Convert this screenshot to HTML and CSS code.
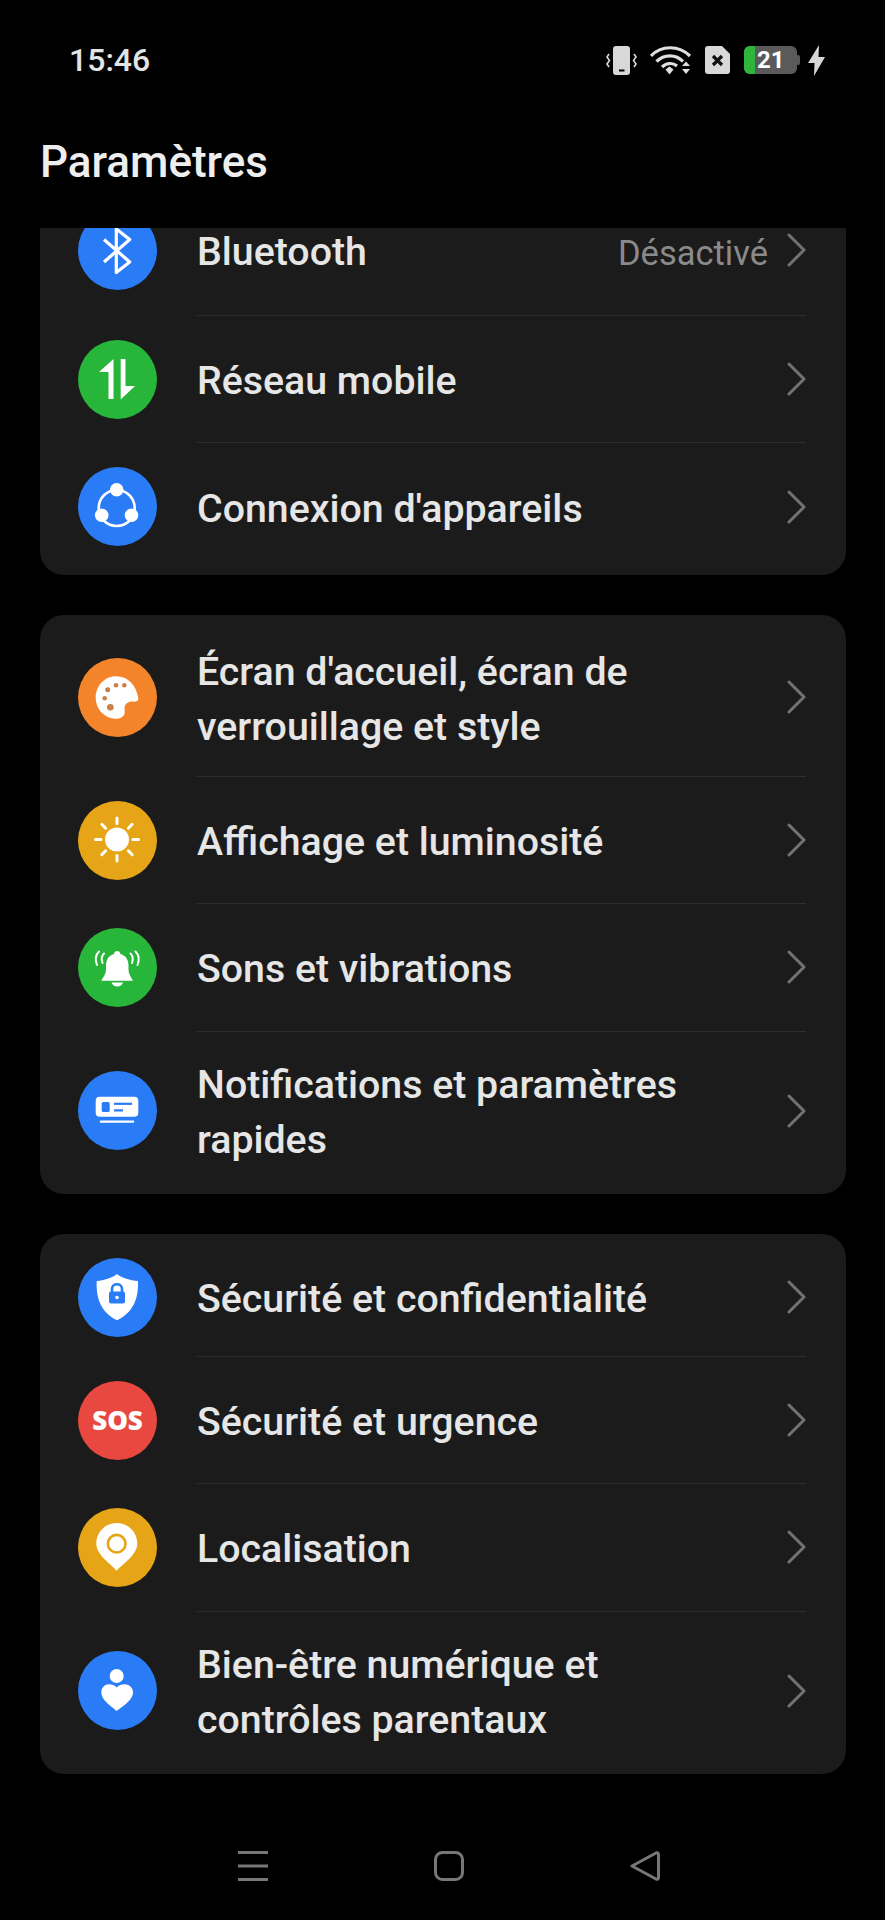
FILE: index.html
```html
<!DOCTYPE html>
<html lang="fr">
<head>
    <meta charset="UTF-8">
    <meta name="viewport" content="width=device-width, initial-scale=1.0">
    <title>Paramètres</title>
    <link rel="stylesheet" href="styles.css">
</head>
<body>
    <div class="phone">
        <div class="status-bar">
            <span class="time">15:46</span>
            <div class="status-icons">
                <svg class="st-vibrate" viewBox="0 0 31 29" fill="none" stroke="#d8d8d8">
                    <rect x="7" y="0" width="17" height="29" rx="3" fill="#d8d8d8" stroke="none"/>
                    <rect x="13" y="23.500" width="5.500" height="2" fill="#000" stroke="none"/>
                    <path d="M3 8 L1 11 L3.500 14.500 L1 18 L3 21" stroke-width="1.600"/>
                    <path d="M28 8 L30 11 L27.500 14.500 L30 18 L28 21" stroke-width="1.600"/>
                </svg>
                <svg class="st-wifi" viewBox="0 0 42 29" fill="none" stroke="#e0e0e0" stroke-width="3.200">
                    <path d="M1 10 C11 -1 29 -1 40 10"/>
                    <path d="M6.500 15.500 C14 8 26 8 33 15.500"/>
                    <path d="M12 21 C17 16.500 23 16.500 27 20"/>
                    <path d="M15.500 23.500 L19.500 20.500 L23.500 23.500 L19.500 28.500Z" fill="#e0e0e0" stroke="none"/>
                    <path d="M32 20 L36 15.500 L40 20Z M32 23 H40 L36 28Z" fill="#e0e0e0" stroke="none"/>
                </svg>
                <svg class="st-sim" viewBox="0 0 25 28">
                    <path d="M3 0 H17 L25 8 V25 Q25 28 22 28 H3 Q0 28 0 25 V3 Q0 0 3 0Z" fill="#d8d8d8"/>
                    <path d="M8 10 L17 19 M17 10 L8 19" stroke="#111" stroke-width="3.200" fill="none"/>
                </svg>
                <div class="battery">
                    <div class="battery-body">
                        <span class="battery-fill"></span>
                        <span class="battery-level">21</span>
                    </div>
                    <span class="battery-cap"></span>
                </div>
                <svg class="st-bolt" viewBox="0 0 17 31">
                    <path d="M11 0 L0 18 H6.500 L6 31 L17 12 H10.500Z" fill="#d8d8d8"/>
                </svg>
            </div>
        </div>

        <h1 class="page-title">Paramètres</h1>

        <div class="scroller">
            <div class="card card-cut">
                <div class="row">
                    <div class="icon blue">
                        <svg viewBox="0 0 79 79" fill="none" stroke="#fff" stroke-width="3.200" stroke-linejoin="round">
                            <path d="M26 28.500 L51.700 51 L38.300 61.500 V18 L51.700 28.500 L26 51"/>
                        </svg>
                    </div>
                    <div class="row-body">
                        <span class="label">Bluetooth</span>
                        <span class="value">Désactivé</span>
                        <svg class="chevron" viewBox="0 0 19 34"><path d="M2 2 L17 17 L2 32"/></svg>
                    </div>
                </div>
                <div class="row">
                    <div class="icon green">
                        <svg viewBox="0 0 79 79" fill="#fff">
                            <path d="M35.500 19 V59 H30.500 V32 H21Z"/>
                            <path d="M42.700 19 H47.500 V46 H57 L42.700 59.500Z"/>
                        </svg>
                    </div>
                    <div class="row-body">
                        <span class="label">Réseau mobile</span>
                        <svg class="chevron" viewBox="0 0 19 34"><path d="M2 2 L17 17 L2 32"/></svg>
                    </div>
                </div>
                <div class="row">
                    <div class="icon blue">
                        <svg viewBox="0 0 79 79" fill="#fff">
                            <circle cx="38.700" cy="41" r="18" fill="none" stroke="#fff" stroke-width="2.600"/>
                            <circle cx="38.700" cy="22.700" r="6.800"/>
                            <circle cx="23.700" cy="48.300" r="6.800"/>
                            <circle cx="53.500" cy="48.300" r="6.800"/>
                        </svg>
                    </div>
                    <div class="row-body">
                        <span class="label">Connexion d'appareils</span>
                        <svg class="chevron" viewBox="0 0 19 34"><path d="M2 2 L17 17 L2 32"/></svg>
                    </div>
                </div>
            </div>

            <div class="card">
                <div class="row row-tall">
                    <div class="icon orange">
                        <svg viewBox="0 0 79 79">
                            <path d="M38 18.300 C50 18.300 58 27 60.300 40 C60.800 43.500 57 44 54 43.500 C49.500 43 46 47 46.500 51 C47 54 47 57 44 59 C42 60.500 40 60.700 38 60.700 C26.500 60.700 17.700 51 17.700 39.500 C17.700 28 26.500 18.300 38 18.300Z" fill="#fff"/>
                            <g fill="#c97f45">
                                <circle cx="29.700" cy="31.700" r="2.500"/>
                                <circle cx="38" cy="27.300" r="2.300"/>
                                <circle cx="46.300" cy="27.300" r="2.300"/>
                                <circle cx="26.700" cy="40.300" r="2.300"/>
                                <circle cx="32.300" cy="49.300" r="3.300"/>
                            </g>
                        </svg>
                    </div>
                    <div class="row-body">
                        <span class="label">Écran d'accueil, écran de verrouillage et style</span>
                        <svg class="chevron" viewBox="0 0 19 34"><path d="M2 2 L17 17 L2 32"/></svg>
                    </div>
                </div>
                <div class="row">
                    <div class="icon amber">
                        <svg viewBox="0 0 79 79" fill="#fff" stroke="#fff">
                            <circle cx="39" cy="38.500" r="12" stroke="none"/>
                            <path d="M39 17 V22.500 M39 54.500 V60 M17.500 38.500 H23 M55 38.500 H60.500 M23.800 23.300 L27.700 27.200 M50.300 49.800 L54.200 53.700 M54.200 23.300 L50.300 27.200 M27.700 49.800 L23.800 53.700" stroke-width="3" stroke-linecap="round"/>
                        </svg>
                    </div>
                    <div class="row-body">
                        <span class="label">Affichage et luminosité</span>
                        <svg class="chevron" viewBox="0 0 19 34"><path d="M2 2 L17 17 L2 32"/></svg>
                    </div>
                </div>
                <div class="row">
                    <div class="icon green">
                        <svg viewBox="0 0 79 79" fill="#fff">
                            <path d="M39.200 23 C41 23 42.200 24.200 42.400 26 C48 27.500 50.500 32 50.500 38 V42 C50.500 46 53 49 55 52.700 H23.300 C25.300 49 28 46 28 42 V38 C28 32 30.500 27.500 36 26 C36.200 24.200 37.400 23 39.200 23Z"/>
                            <path d="M33.500 54.500 H45 C44 57 42 58.500 39.200 58.500 C36.500 58.500 34.500 57 33.500 54.500Z"/>
                            <g fill="none" stroke="#fff" stroke-width="2" stroke-linecap="round">
                                <path d="M21 23.500 C17.500 27 17 32 19 37"/>
                                <path d="M26 25.500 C23.500 28 23 31 24.500 35"/>
                                <path d="M57.500 23.500 C61 27 61.500 32 59.500 37"/>
                                <path d="M52.500 25.500 C55 28 55.500 31 54 35"/>
                            </g>
                        </svg>
                    </div>
                    <div class="row-body">
                        <span class="label">Sons et vibrations</span>
                        <svg class="chevron" viewBox="0 0 19 34"><path d="M2 2 L17 17 L2 32"/></svg>
                    </div>
                </div>
                <div class="row row-tall">
                    <div class="icon blue">
                        <svg viewBox="0 0 79 79" fill="#fff">
                            <rect x="17.700" y="25.700" width="42.600" height="20" rx="4"/>
                            <rect x="23.700" y="31" width="8" height="10" rx="1.500" fill="#2a7bf6"/>
                            <rect x="36" y="31.700" width="18" height="2.200" fill="#2a7bf6"/>
                            <rect x="36" y="38.300" width="9" height="2.200" fill="#2a7bf6"/>
                            <rect x="21.700" y="49.500" width="34.500" height="2.200" rx="1"/>
                        </svg>
                    </div>
                    <div class="row-body">
                        <span class="label">Notifications et paramètres rapides</span>
                        <svg class="chevron" viewBox="0 0 19 34"><path d="M2 2 L17 17 L2 32"/></svg>
                    </div>
                </div>
            </div>

            <div class="card">
                <div class="row row-short">
                    <div class="icon blue">
                        <svg viewBox="0 0 79 79">
                            <path d="M39 16 C44 20 52 22.500 60 23 C60.500 40 56 54 39 62.300 C22.500 54 18 40 18.700 23 C26 22.500 34 20 39 16Z" fill="#fff"/>
                            <path d="M34 34 V31 C34 24.700 44 24.700 44 31 V34" fill="none" stroke="#2a7bf6" stroke-width="2.600"/>
                            <rect x="31" y="33.500" width="16" height="12" rx="2" fill="#2a7bf6"/>
                            <circle cx="39" cy="39.500" r="1.800" fill="#fff"/>
                        </svg>
                    </div>
                    <div class="row-body">
                        <span class="label">Sécurité et confidentialité</span>
                        <svg class="chevron" viewBox="0 0 19 34"><path d="M2 2 L17 17 L2 32"/></svg>
                    </div>
                </div>
                <div class="row">
                    <div class="icon red">
                        <span class="sos">SOS</span>
                    </div>
                    <div class="row-body">
                        <span class="label">Sécurité et urgence</span>
                        <svg class="chevron" viewBox="0 0 19 34"><path d="M2 2 L17 17 L2 32"/></svg>
                    </div>
                </div>
                <div class="row">
                    <div class="icon amber">
                        <svg viewBox="0 0 79 79">
                            <path d="M38.700 62.700 C33 56 18.300 47 18.300 35.500 C18.300 24 27.500 15 38.700 15 C50 15 59.300 24 59.300 35.500 C59.300 47 44.500 56 38.700 62.700Z" fill="#fff"/>
                            <circle cx="38.700" cy="35.700" r="8.800" fill="#fff" stroke="#e6a516" stroke-width="2.600"/>
                        </svg>
                    </div>
                    <div class="row-body">
                        <span class="label">Localisation</span>
                        <svg class="chevron" viewBox="0 0 19 34"><path d="M2 2 L17 17 L2 32"/></svg>
                    </div>
                </div>
                <div class="row row-tall">
                    <div class="icon blue">
                        <svg viewBox="0 0 79 79" fill="#fff">
                            <circle cx="38.700" cy="25" r="7"/>
                            <path d="M38.700 60 C36 57 23.300 50 23.300 41.500 C23.300 36.500 27 33.300 31 33.300 C34 33.300 37 34.500 38.700 36.500 C40.500 34.500 43.500 33.300 46.500 33.300 C51 33.300 55 36.500 55 41.500 C55 50 42 57 38.700 60Z"/>
                        </svg>
                    </div>
                    <div class="row-body">
                        <span class="label">Bien-être numérique et contrôles parentaux</span>
                        <svg class="chevron" viewBox="0 0 19 34"><path d="M2 2 L17 17 L2 32"/></svg>
                    </div>
                </div>
            </div>
        </div>

        <div class="nav-bar">
            <svg class="nav-icon" viewBox="0 0 30 30"><path d="M0 1.500 H30 M0 15 H30 M0 28.500 H30"/></svg>
            <svg class="nav-icon" viewBox="0 0 30 30"><rect x="1.500" y="1.500" width="27" height="27" rx="7"/></svg>
            <svg class="nav-icon" viewBox="0 0 30 30"><path d="M2 15 L26 2 Q28.500 1 28.500 4 V26 Q28.500 29 26 28 Z" stroke-linejoin="round"/></svg>
        </div>
    </div>
</body>
</html>
```

FILE: styles.css
```css
body {
    margin: 0;
    background-color: #000;
    font-family: Roboto, "Liberation Sans", sans-serif;
    color: #e9e9e9;
}

.phone {
    display: flex;
    flex-direction: column;
    height: 1920px;
    overflow: hidden;
}

.status-bar {
    display: flex;
    align-items: center;
    justify-content: space-between;
    height: 120px;
    padding: 0 60px 0 69px;
    flex-shrink: 0;
}

.time {
    font-size: 32px;
    font-weight: 500;
    color: #e4e4e4;
}

.status-icons {
    display: flex;
    align-items: center;
}

.st-vibrate { width: 31px; height: 29px; margin-right: 13px; }
.st-wifi { width: 42px; height: 29px; margin-right: 13px; }
.st-sim { width: 25px; height: 28px; margin-right: 14px; }
.st-bolt { width: 17px; height: 31px; margin-left: 8px; }

.battery {
    display: flex;
    align-items: center;
}

.battery-body {
    display: flex;
    align-items: center;
    width: 53px;
    height: 28px;
    border-radius: 6px;
    background-color: #5a5a5a;
    overflow: hidden;
}

.battery-fill {
    width: 11px;
    height: 100%;
    margin-right: 2px;
    background-color: #2fb53c;
}

.battery-level {
    font-size: 24px;
    font-weight: 700;
    color: #fff;
}

.battery-cap {
    width: 3px;
    height: 10px;
    border-radius: 0 2px 2px 0;
    background-color: #5a5a5a;
}

.page-title {
    margin: 0;
    padding: 18px 40px 42px;
    font-size: 44px;
    line-height: 48px;
    font-weight: 500;
    color: #eee;
    flex-shrink: 0;
}

.scroller {
    flex: 1;
    overflow: hidden;
    padding: 0 39px 0 40px;
}

.card {
    padding: 4px 0;
    margin-bottom: 40px;
    border-radius: 24px;
    background-color: #1b1b1b;
}

/* first card is scrolled under the title */
.card-cut {
    margin-top: -46px;
}

.card-cut .row:first-child .row-body {
    min-height: 129.5px;
}

.row {
    display: flex;
    align-items: stretch;
    padding-left: 38px;
}

.icon {
    display: flex;
    align-items: center;
    justify-content: center;
    align-self: center;
    width: 79px;
    height: 79px;
    border-radius: 50%;
    flex-shrink: 0;
    margin-right: 40px;
}

.icon svg {
    width: 79px;
    height: 79px;
}

.blue { background-color: #2a7bf6; }
.green { background-color: #27b53a; }
.orange { background-color: #f4842a; }
.amber { background-color: #e6a516; }
.red { background-color: #e8483f; }

.sos {
    font-family: "Open Sans", sans-serif;
    font-size: 26px;
    font-weight: 800;
    color: #fff;
}

.row-body {
    flex: 1;
    display: flex;
    align-items: center;
    min-height: 127.5px;
    margin-right: 40px;
    border-bottom: 1px solid #2e2e2e;
    box-sizing: border-box;
}

.row:last-child .row-body {
    border-bottom: none;
}

.row-tall .row-body {
    min-height: 158px;
}

.row-short .row-body {
    min-height: 119px;
}

.label {
    flex: 1;
    margin-top: 5px;
    padding-right: 100px;
    font-size: 39.3px;
    line-height: 55px;
    font-weight: 500;
    color: #e6e6e6;
}

.value {
    margin: 5px 19px 0 0;
    font-size: 34.5px;
    color: #8a8a8a;
}

.chevron {
    width: 19px;
    height: 34px;
    flex-shrink: 0;
    fill: none;
    stroke: #727272;
    stroke-width: 3;
    stroke-linecap: round;
    stroke-linejoin: round;
}

.nav-bar {
    display: flex;
    justify-content: center;
    gap: 166px;
    height: 120px;
    padding: 51px 0 0 13px;
    box-sizing: border-box;
    flex-shrink: 0;
}

.nav-icon {
    width: 30px;
    height: 30px;
    fill: none;
    stroke: #777;
    stroke-width: 3;
}
```
